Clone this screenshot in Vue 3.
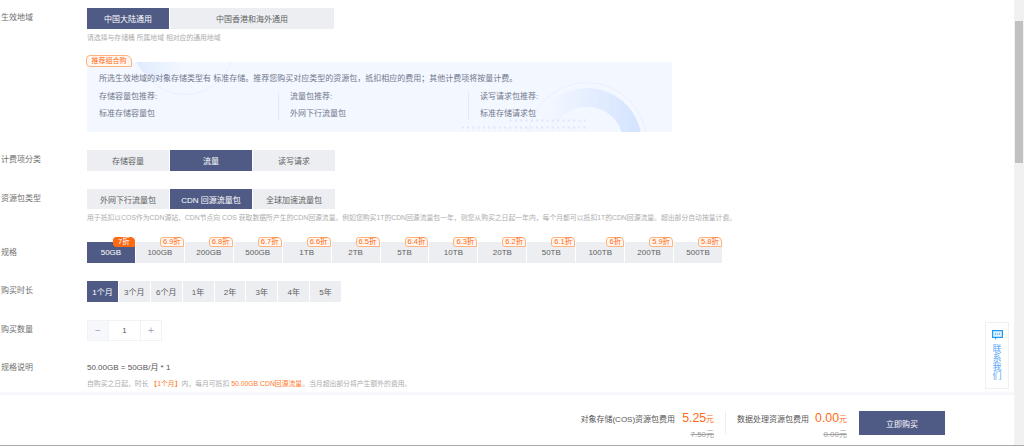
<script setup>
const sizes = [
  ['50GB', '7折'], ['100GB', '6.9折'], ['200GB', '6.8折'], ['500GB', '6.7折'], ['1TB', '6.6折'],
  ['2TB', '6.5折'], ['5TB', '6.4折'], ['10TB', '6.3折'], ['20TB', '6.2折'], ['50TB', '6.1折'],
  ['100TB', '6折'], ['200TB', '5.9折'], ['500TB', '5.8折']
]
const durations = ['1个月', '3个月', '6个月', '1年', '2年', '3年', '4年', '5年']
const recommendations = [
  ['存储容量包推荐:', '标准存储容量包'],
  ['流量包推荐:', '外网下行流量包'],
  ['读写请求包推荐:', '标准存储请求包']
]
</script>

<template>
  <div class="page">
    <div class="viewport">
      <main class="content">
        <section class="row first">
          <div class="label">生效地域</div>
          <div class="body">
            <div class="btns region">
              <button class="btn on">中国大陆通用</button>
              <button class="btn wide">中国香港和海外通用</button>
            </div>
            <p class="hint region-hint">请选择与存储桶 所属地域 相对应的通用地域</p>
            <div class="panel-wrap">
              <span class="rec-badge">推荐组合购</span>
              <div class="panel">
                <i class="ring-left"></i>
                <i class="ring-left-fill"></i>
                <i class="ring-right"></i>
                <i class="ring-right-thick"></i>
                <i class="dots dots-a"></i>
                <i class="dots dots-b"></i>
                <p class="panel-text">所选生效地域的对象存储类型有 标准存储。推荐您购买对应类型的资源包，抵扣相应的费用；其他计费项将按量计费。</p>
                <div class="recs">
                  <div v-for="r in recommendations" :key="r[0]" class="rec">
                    <div>{{ r[0] }}</div>
                    <div class="rec-value">{{ r[1] }}</div>
                  </div>
                </div>
              </div>
            </div>
          </div>
        </section>

        <section class="row billing">
          <div class="label">计费项分类</div>
          <div class="btns three">
            <button class="btn">存储容量</button>
            <button class="btn on">流量</button>
            <button class="btn">读写请求</button>
          </div>
        </section>

        <section class="row type">
          <div class="label">资源包类型</div>
          <div class="body">
            <div class="btns three">
              <button class="btn">外网下行流量包</button>
              <button class="btn on">CDN 回源流量包</button>
              <button class="btn">全球加速流量包</button>
            </div>
            <p class="hint type-hint">用于抵扣以COS作为CDN源站、CDN节点向 COS 获取数据所产生的CDN回源流量。例如您购买1T的CDN回源流量包一年，则您从购买之日起一年内，每个月都可以抵扣1T的CDN回源流量。超出部分自动按量计费。</p>
          </div>
        </section>

        <section class="row spec">
          <div class="label">规格</div>
          <div class="btns sizes">
            <button v-for="(s, i) in sizes" :key="s[0]" class="btn size" :class="{ on: i === 0 }">
              {{ s[0] }}
              <span class="disc" :class="{ solid: i === 0 }">{{ s[1] }}</span>
            </button>
          </div>
        </section>

        <section class="row duration">
          <div class="label">购买时长</div>
          <div class="btns durations">
            <button v-for="(d, i) in durations" :key="d" class="btn dur" :class="{ on: i === 0 }">{{ d }}</button>
          </div>
        </section>

        <section class="row qty">
          <div class="label">购买数量</div>
          <div class="stepper">
            <span class="step minus">−</span>
            <span class="val">1</span>
            <span class="step">+</span>
          </div>
        </section>

        <section class="row note">
          <div class="label">规格说明</div>
          <div class="body">
            <div class="formula">50.00GB = 50GB/月 * 1</div>
            <p class="hint note-hint">自购买之日起，时长 <em>【1个月】</em>内，每月可抵扣 <em>50.00GB CDN回源流量</em>。当月超出部分将产生额外的费用。</p>
          </div>
        </section>
      </main>

      <footer class="footer">
        <div class="fee cos">
          <div class="fee-main"><span class="fee-name">对象存储(COS)资源包费用</span><span class="price">5.25</span><span class="unit">元</span></div>
          <del>7.50元</del>
        </div>
        <span class="sep"></span>
        <div class="fee">
          <div class="fee-main"><span class="fee-name">数据处理资源包费用</span><span class="price">0.00</span><span class="unit">元</span></div>
          <del>0.00元</del>
        </div>
        <button class="buy">立即购买</button>
      </footer>

      <aside class="contact">
        <svg width="11" height="10" viewBox="0 0 11 10" aria-hidden="true">
          <path d="M0 0H11V8H4.5L3 10V8H0Z" fill="#1e9bf5" />
          <rect x="1.2" y="1.2" width="8.6" height="5.6" fill="#dff1ff" />
          <rect x="3" y="3.5" width="1" height="1" fill="#1e9bf5" />
          <rect x="5" y="3.5" width="1" height="1" fill="#1e9bf5" />
          <rect x="7" y="3.5" width="1" height="1" fill="#1e9bf5" />
        </svg>
        <span>联<br />系<br />我<br />们</span>
      </aside>
    </div>
    <div class="scrollbar"><span class="thumb"></span></div>
  </div>
</template>

<style>
html, body { margin: 0; height: 446px; overflow: hidden; background: #fff; }
</style>

<style scoped>
.page {
  display: flex;
  width: 1024px;
  height: 446px;
  overflow: hidden;
  font-family: "Liberation Sans", "Noto Sans CJK SC", sans-serif;
  font-size: 8px;
  color: #666;
  border-bottom: 1px solid #aaa;
  box-sizing: border-box;
}
.viewport {
  position: relative;
  flex: 1;
  min-width: 0;
  display: flex;
  flex-direction: column;
}
.content { flex: 1; min-height: 0; overflow: hidden; padding-top: 8px; box-sizing: border-box; }
.row { display: flex; padding-left: 1px; }
.label { width: 86px; flex: none; line-height: 20px; color: #6f6f6f; }
.body { min-width: 0; }
p { margin: 0; }
.btns { display: flex; gap: 1px; }
.btn {
  position: relative;
  height: 21px;
  padding: 0;
  border: 0;
  background: #eceef2;
  color: #5f5f5f;
  font: inherit;
  text-align: center;
  white-space: nowrap;
}
.btn.on { background: #4f5b85; color: #fff; }
.region .btn { width: 82px; }
.region .btn.wide { width: 164px; }
.three .btn { width: 82px; }
.hint { color: #adadad; font-size: 6.83px; line-height: 10px; white-space: nowrap; }
.region-hint { margin-top: 4px; }
.panel-wrap { position: relative; margin-top: 12px; padding-top: 7px; width: 585px; }
.rec-badge {
  position: absolute;
  left: -1px;
  top: 0;
  z-index: 2;
  width: 44px;
  height: 10px;
  line-height: 10px;
  text-align: center;
  background: #fff7f0;
  border: 1px solid #ffb27d;
  border-radius: 4px 6px 0 4px;
  color: #ff6a13;
  font-size: 7px;
  box-sizing: content-box;
}
.panel {
  position: relative;
  height: 70px;
  overflow: hidden;
  background: #f3f7ff;
  padding: 12px 12px 0;
  box-sizing: border-box;
  color: #70778c;
}
.panel-text, .recs { position: relative; }
.panel-text { line-height: 10px; white-space: nowrap; }
.recs { display: flex; margin-top: 8px; }
.rec { flex: none; width: 179px; height: 28px; line-height: 10px; box-sizing: border-box; }
.rec + .rec { border-left: 1px solid #e3eaf6; padding-left: 11px; width: 190px; }
.rec-value { margin-top: 7px; }
.ring-left, .ring-left-fill, .ring-right, .ring-right-thick { position: absolute; border-radius: 50%; }
.ring-left { left: 48px; top: -67px; width: 100px; height: 100px; border: 1px solid #e8effc; box-sizing: border-box; }
.ring-left-fill { left: 46px; top: -50px; width: 70px; height: 70px; background: linear-gradient(90deg, #dfeaff, rgba(243, 247, 255, 0) 70%); }
.ring-right { left: 440px; top: 20px; width: 120px; height: 120px; border: 1px solid #eaf0fd; box-sizing: border-box; }
.ring-right-thick { left: 445px; top: 26px; width: 110px; height: 110px; background: linear-gradient(90deg, rgba(243, 247, 255, 0) 15%, #d6e5ff 90%); -webkit-mask: radial-gradient(circle, transparent 36px, #000 36.5px); mask: radial-gradient(circle, transparent 36px, #000 36.5px); }
.dots { position: absolute; height: 3px; background: radial-gradient(circle, #dbe6fb 1px, transparent 1.2px) 0 0 / 5.3px 3px repeat-x; }
.dots-a { left: 421px; top: 57px; width: 81px; }
.dots-b { left: 373px; top: 64px; width: 129px; }
.billing { margin-top: 18px; }
.type { margin-top: 18px; }
.type .btn { height: 20px; }
.type-hint { margin-top: 4px; }
.spec { margin-top: 19px; }
.spec .label { line-height: 21px; }
.sizes { width: 635px; }
.btn.size { flex: 1; }
.disc {
  position: absolute;
  right: 0;
  top: -5px;
  height: 10px;
  min-width: 14px;
  padding: 0 2px;
  box-sizing: border-box;
  line-height: 8px;
  color: #ff6a13;
  background: #fff7f0;
  border: 1px solid #ffb27d;
  border-radius: 3px 4px 0 3px;
  font-size: 7.5px;
}
.disc.solid { background: #ff6a13; border-color: #ff6a13; color: #fff; width: 22px; text-align: center; }
.duration { margin-top: 18px; }
.durations { width: 254px; }
.btn.dur { flex: 1; }
.qty { margin-top: 18px; }
.stepper { display: flex; height: 21px; border: 1px solid #f0f2f6; box-sizing: border-box; width: 75px; }
.step { width: 20px; text-align: center; line-height: 19px; color: #9aa3b5; font-size: 10px; }
.step.minus { background: #f6f8fb; border-right: 1px solid #f0f2f6; }
.val { flex: 1; text-align: center; line-height: 19px; color: #555; }
.step:last-child { border-left: 1px solid #f0f2f6; }
.note { margin-top: 17px; }
.formula { line-height: 20px; color: #555; }
.note-hint { margin-top: 1px; }
em { font-style: normal; color: #ff7a2b; }
.footer {
  flex: none;
  height: 51px;
  display: flex;
  justify-content: flex-end;
  align-items: flex-start;
  padding: 16px 69px 0 0;
  box-sizing: border-box;
  background: #fff;
  border-top: 1px solid #f5f6fa;
  box-shadow: 0 -2px 2px #f7f8fb;
  position: relative;
}
.fee { display: flex; flex-direction: column; align-items: flex-end; color: #555; }
.fee-main { display: flex; align-items: baseline; line-height: 14px; height: 14px; }
.fee-name { margin-right: 6px; color: #555; }
.cos .fee-name { margin-right: 7px; }
.price { color: #ff6a13; font-size: 12.3px; }
.unit { color: #ff6a13; font-size: 8px; }
del { margin-top: 5px; color: #a0a0a0; line-height: 10px; }
.sep { width: 1px; height: 23px; background: #eee; margin: 0 11px; }
.buy { width: 86px; height: 24px; margin-left: 12px; border: 0; background: #4f5b85; color: #fff; font: inherit; }
.contact {
  position: absolute;
  left: 985px;
  top: 322px;
  width: 24px;
  height: 67px;
  box-sizing: border-box;
  border: 1px solid #edf1f7;
  background: #fff;
  display: flex;
  flex-direction: column;
  align-items: center;
  padding-top: 7px;
  color: #5aa8f5;
  line-height: 9px;
  font-size: 9px;
}
.contact span { margin-top: 5px; text-align: center; }
.scrollbar { width: 10px; flex: none; background: #f1f1f1; padding: 21px 1px 0; box-sizing: border-box; }
.thumb { display: block; height: 142px; background: #c1c1c1; }
</style>
